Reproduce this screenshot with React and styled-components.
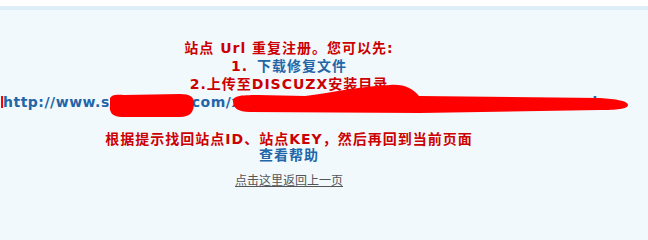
import React from "react";
import styled, { createGlobalStyle } from "styled-components";

const GlobalStyle = createGlobalStyle`
  html, body {
    margin: 0;
    padding: 0;
    background: #f2f9fd;
  }
  body {
    font-family: "DejaVu Sans", "Noto Sans CJK SC", sans-serif;
  }
`;

const Page = styled.div`
  position: relative;
  display: flex;
  flex-direction: column;
  width: 648px;
  height: 221px;
  padding-top: 6px;
  box-sizing: border-box;
  background: #fff;
  overflow: hidden;
`;

const Panel = styled.div`
  flex: 1;
  border-top: 4px solid #deeef8;
  background: #f2f9fd;
  padding-top: 29px;
`;

const Message = styled.div`
  width: 572px;
  margin-left: 3px;
  text-align: center;
`;

const Notice = styled.p`
  margin: ${props => props.$gap || 0}px 0 0;
  font-size: 14px;
  font-weight: bold;
  line-height: ${props => props.$lh}px;
  letter-spacing: 1px;
  color: #c00;
  white-space: nowrap;
`;

const Step = styled.span`
  margin-right: 3px;
`;

const Link = styled.a`
  color: #2366a8;
  text-decoration: none;
  cursor: pointer;
`;

const UrlLine = styled.span`
  color: #2366a8;
  letter-spacing: 0.5px;
`;

const BackRow = styled.div`
  margin-top: 8px;
  line-height: 18px;
`;

const BackLink = styled.a`
  font-family: "Noto Sans CJK SC", sans-serif;
  font-size: 12px;
  color: #555;
  text-decoration: underline;
  cursor: pointer;
`;

const Scribble = styled.svg`
  position: absolute;
  left: 0;
  top: 0;
  pointer-events: none;
`;

const Redaction = () => (
  <Scribble width="648" height="221" viewBox="0 0 648 221">
    <g fill="#ff0000">
      <rect x="1" y="96" width="2" height="12" />
      <path d="M110,99 C110,95 116,94 124,95 L180,94 C190,94 194,97 194,103 C194,112 190,117 180,117 L122,117 C112,117 109,112 110,105 Z" />
      <path d="M233,101 C233,96 240,95 258,95 L305,96 C330,93 360,86 390,85 C405,84 413,89 419,96 L600,98 C616,99 628,101 628,105 C628,109 616,110 600,110 L420,113 L250,112 C238,112 233,108 233,101 Z" />
    </g>
  </Scribble>
);

const App = () => (
  <Page>
    <GlobalStyle />
    <Panel>
      <Message>
        <Notice $lh={18}>
          站点 Url 重复注册。您可以先:
          <br />
          <Step>1.</Step> <Link>下载修复文件</Link>
          <br />
          2.上传至DISCUZX安装目录
          <br />
          <UrlLine>http://www.sxxxxxxxx.com/xxxxxxxxxx/xxxxxxxxxxx/xxxxxxxxxxxxxx.php</UrlLine>
        </Notice>
        <Notice $lh={16} $gap={20}>
          根据提示找回站点ID、站点KEY，然后再回到当前页面
          <br />
          <Link>查看帮助</Link>
        </Notice>
        <BackRow>
          <BackLink>点击这里返回上一页</BackLink>
        </BackRow>
      </Message>
    </Panel>
    <Redaction />
  </Page>
);

export default App;
